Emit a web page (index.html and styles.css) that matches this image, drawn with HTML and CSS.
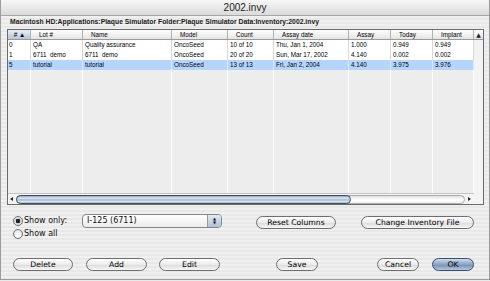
FILE: index.html
```html
<!DOCTYPE html>
<html lang="en">
<head>
    <meta charset="UTF-8">
    <meta name="viewport" content="width=device-width, initial-scale=1.0">
    <link rel="stylesheet" href="styles.css">
    <title>2002.invy</title>
</head>
<body>
    <div class="window">
        <div class="titlebar">2002.invy</div>
        <div class="path">Macintosh HD:Applications:Plaque Simulator Folder:Plaque Simulator Data:Inventory:2002.invy</div>

        <div class="table-box">
            <div class="table-main">
                <div class="cols head">
                    <div class="sorted"># &#9650;</div>
                    <div>Lot #</div>
                    <div>Name</div>
                    <div>Model</div>
                    <div>Count</div>
                    <div>Assay date</div>
                    <div>Assay</div>
                    <div>Today</div>
                    <div>Implant</div>
                </div>
                <div class="cols row">
                    <div>0</div><div>QA</div><div>Quality assurance</div><div>OncoSeed</div><div>10 of 10</div>
                    <div>Thu, Jan 1, 2004</div><div>1.000</div><div>0.949</div><div>0.949</div>
                </div>
                <div class="cols row">
                    <div>1</div><div>6711&nbsp; demo</div><div>6711&nbsp; demo</div><div>OncoSeed</div><div>20 of 20</div>
                    <div>Sun, Mar 17, 2002</div><div>4.140</div><div>0.002</div><div>0.002</div>
                </div>
                <div class="cols row selected">
                    <div>5</div><div>tutorial</div><div>tutorial</div><div>OncoSeed</div><div>13 of 13</div>
                    <div>Fri, Jan 2, 2004</div><div>4.140</div><div>3.975</div><div>3.976</div>
                </div>
                <div class="cols filler">
                    <div></div><div></div><div></div><div></div><div></div><div></div><div></div><div></div><div></div>
                </div>
                <div class="hscroll">
                    <span class="arrow arrow-left"></span>
                    <div class="track"><div class="thumb"></div></div>
                    <span class="arrow arrow-right"></span>
                </div>
            </div>
            <div class="vscroll">
                <div class="vs-head">&#9650;</div>
                <div class="vs-track"></div>
                <div class="vs-corner"></div>
            </div>
        </div>

        <div class="options">
            <div class="radios">
                <div class="radio"><span class="dot checked"></span>Show only:</div>
                <div class="radio"><span class="dot"></span>Show all</div>
            </div>
            <div class="popup">
                <span class="popup-label">I-125 (6711)</span>
                <span class="popup-arrows"><i>&#9650;</i><i>&#9660;</i></span>
            </div>
            <button class="btn btn-reset">Reset Columns</button>
            <button class="btn btn-change">Change Inventory File</button>
        </div>

        <div class="actions">
            <button class="btn btn-delete">Delete</button>
            <button class="btn btn-add">Add</button>
            <button class="btn btn-edit">Edit</button>
            <button class="btn btn-save">Save</button>
            <button class="btn btn-cancel">Cancel</button>
            <button class="btn btn-ok">OK</button>
        </div>
    </div>
</body>
</html>
```

FILE: styles.css
```css
body {
    margin: 0;
    font-family: "DejaVu Sans", sans-serif;
    background: #e9e9e9;
}
.window {
    width: 490px;
    height: 280px;
    box-sizing: border-box;
    border: 1px solid #9c9c9c;
    border-top: none;
    background: repeating-linear-gradient(#f0f0f0 0, #f0f0f0 2px, #e8e8e8 2px, #e8e8e8 4px);
}
.titlebar {
    height: 15px;
    border-bottom: 1px solid #a6a6a6;
    background: linear-gradient(#f7f7f7, #dadada);
    text-align: center;
    font: 10px/15px "Liberation Sans", sans-serif;
    color: #1c1c1c;
}
.path {
    height: 13px;
    margin-left: 9px;
    font: bold 6.8px/12px "Liberation Sans", sans-serif;
    color: #1a1a1a;
    white-space: nowrap;
}

/* list */
.table-box {
    display: flex;
    width: 477px;
    height: 176px;
    margin-left: 6px;
    box-sizing: border-box;
    border: 1px solid #6a6a6a;
    background: #fff;
}
.table-main {
    width: 466px;
    display: flex;
    flex-direction: column;
}
.cols {
    display: grid;
    grid-template-columns: 23px 52px 89px 56px 46px 75px 42px 42px 41px;
    font: 6.3px/10px "Liberation Sans", sans-serif;
    color: #000;
}
.cols > div {
    box-sizing: border-box;
    border-right: 1px solid #dadada;
    padding-left: 2px;
    white-space: nowrap;
    overflow: hidden;
}
.cols > div:first-child {
    padding-left: 1px;
}
.head {
    height: 10px;
    box-sizing: border-box;
    border-bottom: 1px solid #9a9a9a;
    line-height: 9px;
}
.head > div {
    padding-left: 8px;
    border-right-color: #b2b2b2;
    background: linear-gradient(#ffffff, #e3e3e3);
}
.head > .sorted {
    padding-left: 0;
    text-align: center;
    background: linear-gradient(#e9eef5, #b8c5d6);
}
.row {
    height: 10px;
}
.row.selected > div {
    background: #b5d5ff;
    border-right-color: #d9e8ff;
}
.filler {
    flex: 1;
}
.filler > div {
    background: #ededed;
    border-right-color: #fff;
}

/* scrollbars */
.hscroll {
    height: 11px;
    display: flex;
    align-items: center;
    border-top: 1px solid #c4c4c4;
    box-sizing: border-box;
    background: #f4f4f4;
}
.arrow {
    width: 0;
    height: 0;
    border-top: 2px solid transparent;
    border-bottom: 2px solid transparent;
}
.arrow-left {
    margin: 0 3px 0 2px;
    border-right: 3px solid #222;
}
.arrow-right {
    margin: 0 3px 0 3px;
    border-left: 3px solid #222;
}
.track {
    flex: 1;
    height: 9px;
    box-sizing: border-box;
    border: 1px solid #a9a9a9;
    border-radius: 5px;
    background: linear-gradient(#e2e2e2, #ffffff 60%, #f2f2f2);
    display: flex;
}
.thumb {
    width: 335px;
    margin: -1px 0 0 -1px;
    height: 9px;
    box-sizing: border-box;
    border: 1px solid #3f5068;
    border-radius: 5px;
    background: linear-gradient(#8ea0b6, #e4ebf3 30%, #a8bbd1 55%, #dbe4ee 80%, #9fb0c4);
}
.vscroll {
    flex: 1;
    display: flex;
    flex-direction: column;
}
.vs-head {
    height: 10px;
    box-sizing: border-box;
    border-bottom: 1px solid #9a9a9a;
    background: linear-gradient(#ffffff, #e3e3e3);
    font: 6px/9px "DejaVu Sans", sans-serif;
    text-align: center;
    color: #222;
}
.vs-track {
    flex: 1;
    background: #f3f3f3;
}
.vs-corner {
    height: 11px;
    background: #f3f3f3;
}

/* controls */
.options {
    display: flex;
    align-items: flex-start;
    margin-top: 9px;
    padding-left: 12px;
}
.radios {
    width: 69px;
}
.radio {
    display: flex;
    align-items: center;
    gap: 1px;
    height: 13px;
    font-size: 8px;
    color: #111;
}
.dot {
    width: 10px;
    height: 10px;
    box-sizing: border-box;
    border: 1px solid #6c6c6c;
    border-radius: 50%;
    background: radial-gradient(circle at 50% 70%, #ffffff, #dcdcdc);
}
.dot.checked {
    background: radial-gradient(circle, #1f1f1f 0, #1f1f1f 2px, #cfcfcf 2.5px, #ffffff 5px);
}
.popup {
    display: flex;
    width: 140px;
    height: 14px;
    box-sizing: border-box;
    border: 1px solid #858585;
    border-radius: 4px;
    background: linear-gradient(#ffffff, #ececec);
}
.popup-label {
    flex: 1;
    padding-left: 4px;
    font-size: 8px;
    line-height: 12px;
    color: #111;
}
.popup-arrows {
    width: 13px;
    display: flex;
    flex-direction: column;
    justify-content: center;
    align-items: center;
    border-radius: 0 3px 3px 0;
    border-left: 1px solid #8c9aab;
    background: linear-gradient(#e3ebf5, #aebfd5);
}
.popup-arrows i {
    font-style: normal;
    font-size: 4px;
    line-height: 4px;
    color: #111;
}
.btn {
    height: 13px;
    padding: 0;
    box-sizing: border-box;
    border: 1px solid #6d6d6d;
    border-radius: 7px;
    background: linear-gradient(#ffffff, #ebebeb 50%, #dcdcdc 55%, #f7f7f7);
    font: 7.7px/11px "DejaVu Sans", sans-serif;
    color: #000;
    text-align: center;
}
.btn-reset {
    width: 80px;
    margin: 2px 0 0 34px;
}
.btn-change {
    width: 113px;
    margin: 2px 0 0 25px;
}
.actions {
    display: flex;
    margin-top: 18px;
    padding-left: 12px;
}
.btn-delete { width: 60px; }
.btn-add { width: 61px; margin-left: 13px; }
.btn-edit { width: 61px; margin-left: 12px; }
.btn-save { width: 42px; margin-left: 56px; }
.btn-cancel { width: 42px; margin-left: 59px; }
.btn-ok {
    width: 42px;
    margin-left: 13px;
    border-color: #3c4f6a;
    background: linear-gradient(#cfdbe9, #8aa2c2 50%, #7892b6 55%, #b3c6de);
}
```
